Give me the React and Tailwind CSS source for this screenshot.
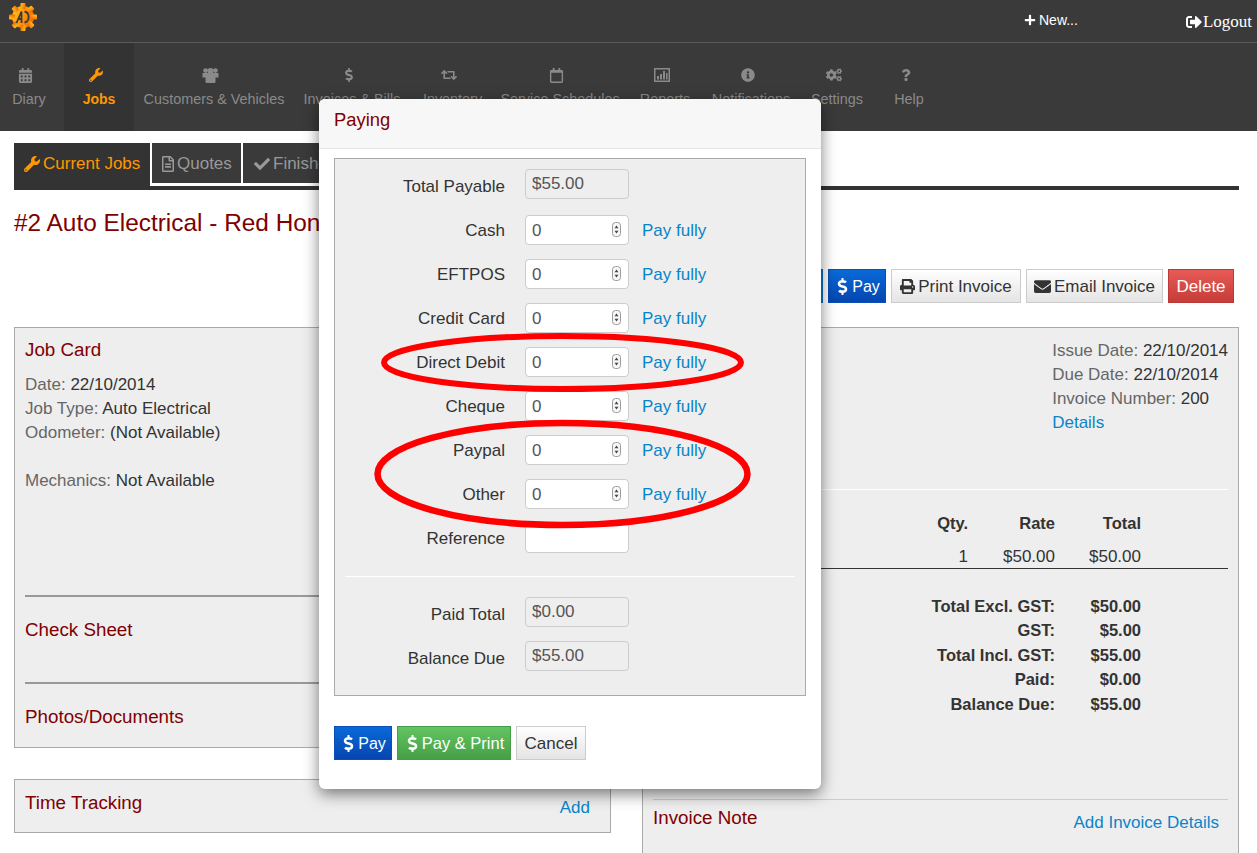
import React from "react";
import { FaCalendarAlt, FaWrench, FaDollarSign, FaRetweet, FaRegCalendar, FaInfoCircle, FaCogs, FaQuestion, FaRegFileAlt, FaCheck, FaPlus, FaPrint, FaEnvelope, FaSignOutAlt } from "react-icons/fa";

const Logo = () => (
  <svg width="30" height="30" viewBox="0 0 30 30" aria-hidden="true">
    <defs>
      <linearGradient id="lg" x1="0" y1="0" x2="1" y2="0.4">
        <stop offset="0" stopColor="#ffc414" />
        <stop offset="0.5" stopColor="#ffa010" />
        <stop offset="1" stopColor="#f26f00" />
      </linearGradient>
    </defs>
    <g fill="url(#lg)">
      <circle cx="15" cy="15" r="11" />
      {[0, 45, 90, 135, 180, 225, 270, 315].map((a) => (
        <rect key={a} x="12.5" y="1" width="5" height="6" rx="1" transform={`rotate(${a} 15 15)`} />
      ))}
    </g>
    <path d="M8.5 21L13.5 9.5V21M10.5 17H13.5M16.5 9.5C22 10.5 22 19.5 16.5 20.5" stroke="#3a3a3a" strokeWidth="1.8" fill="none" />
  </svg>
);

const BarsIcon = () => (
  <svg width="16" height="14" viewBox="0 0 16 14" aria-hidden="true" fill="currentColor">
    <path d="M0 0h16v14H0zM1.5 1.5v11h13v-11z" fillRule="evenodd" />
    <rect x="3" y="8" width="2" height="3.5" />
    <rect x="6" y="6" width="2" height="5.5" />
    <rect x="9" y="3" width="2" height="8.5" />
    <rect x="12" y="5" width="1.5" height="6.5" />
  </svg>
);

const GroupIcon = () => (
  <svg width="17" height="15" viewBox="0 0 17 15" aria-hidden="true" fill="currentColor">
    <circle cx="3.6" cy="2.6" r="2.4" />
    <circle cx="13.4" cy="2.6" r="2.4" />
    <circle cx="8.5" cy="3" r="3" />
    <path d="M0.5 5h16v4.5h-3V14a1 1 0 0 1-1 1h-8a1 1 0 0 1-1-1V9.5h-3z" />
  </svg>
);

const navItems = [
  { label: "Diary", icon: <FaCalendarAlt size={15} />, cls: "w-[58px]", after: "mr-[6px]" },
  { label: "Jobs", icon: <FaWrench size={14} />, cls: "w-[70px]", active: true },
  { label: "Customers & Vehicles", icon: <GroupIcon />, cls: "w-[160px]" },
  { label: "Invoices & Bills", icon: <FaDollarSign size={14} />, cls: "w-[116px]" },
  { label: "Inventory", icon: <FaRetweet size={16} />, cls: "w-[85px]" },
  { label: "Service Schedules", icon: <FaRegCalendar size={15} />, cls: "w-[130px]" },
  { label: "Reports", icon: <BarsIcon />, cls: "w-[80px]" },
  { label: "Notifications", icon: <FaInfoCircle size={14} />, cls: "w-[92px]" },
  { label: "Settings", icon: <FaCogs size={16} />, cls: "w-[80px]" },
  { label: "Help", icon: <FaQuestion size={12} />, cls: "w-[64px]" },
];

const Spinner = () => (
  <svg className="absolute right-[7px] top-[6px]" width="9" height="15" viewBox="0 0 9 15" aria-hidden="true">
    <rect x="0.5" y="0.5" width="8" height="14" rx="3" fill="#f7f7f7" stroke="#9a9a9a" />
    <path d="M4.5 3.5L6.5 6.2H2.5zM4.5 11.5L2.5 8.8H6.5z" fill="#444" />
  </svg>
);

const PayRow = ({ label, value, spinner = true, link = true }) => (
  <div className="flex h-[30px] items-center">
    <div className="w-[170px] pt-[2px] text-right text-[#333]">{label}</div>
    <div className="relative ml-[20px] h-[30px] w-[104px] rounded-[4px] border border-[#ccc] bg-white pl-[6px] leading-[29px] text-[#555]">
      {value}
      {spinner && <Spinner />}
    </div>
    {link && <a className="ml-[13px] pt-[1px] text-[#0a84c8]">Pay fully</a>}
  </div>
);

const ReadRow = ({ label, value }) => (
  <div className="flex h-[30px] items-center">
    <div className="w-[170px] pt-[6px] text-right text-[#333]">{label}</div>
    <div className="ml-[20px] h-[30px] w-[104px] rounded-[4px] border border-[#ccc] bg-[#eee] pl-[6px] leading-[28px] text-[#555]">
      {value}
    </div>
  </div>
);

const Btn = ({ className, children }) => (
  <div className={`flex h-[34px] items-center justify-center gap-[1px] border pt-[1px] whitespace-nowrap ${className}`}>{children}</div>
);

const blue = "border-[#0a4fb5] bg-gradient-to-b from-[#0a6ad8] to-[#0645b0] text-[16px] text-white";
const plain = "border-[#ccc] bg-gradient-to-b from-white to-[#e4e4e4] text-[#333]";

const Meta = ({ k, v }) => (
  <div>
    <span className="text-[#666]">{k}: </span>
    <span className="text-[#333]">{v}</span>
  </div>
);

const Tot = ({ k, v }) => (
  <div className="flex text-[16.5px] font-bold">
    <div className="w-[125px] text-right">{k}</div>
    <div className="w-[86px] text-right">{v}</div>
  </div>
);

const Heading = ({ children }) => (
  <h2 className="text-[18.8px] leading-[26px] text-[#800000]">{children}</h2>
);

export default function App() {
  return (
    <div className="relative h-[853px] w-[1257px] overflow-hidden bg-white font-['Liberation_Sans',Arial,sans-serif] text-[17px] text-[#333]">
      {/* Header */}
      <header className="bg-[#3a3a3a]">
        <div className="flex h-[43px] items-start justify-between border-b border-[#5a5a5a] pl-[8px] pr-[5px] pt-[2px]">
          <Logo />
          <div className="flex pt-[4px] text-[14px] text-white">
            <div className="flex items-center gap-[3px]">
              <FaPlus size={12} />
              <span>New...</span>
            </div>
            <div className="ml-[108px] mt-[3px] flex items-center gap-[1px] font-['Liberation_Serif',serif] text-[17px]">
              <FaSignOutAlt size={16} />
              <span>Logout</span>
            </div>
          </div>
        </div>
        <nav className="flex h-[88px]">
          {navItems.map((n) => (
            <div
              key={n.label}
              className={`flex ${n.cls} ${n.after || ""} flex-col items-center pt-[24px] ${n.active ? "bg-[#333] text-[14px] font-bold text-[#ff9800]" : "text-[14.4px] text-[#8a8a8a]"}`}
            >
              <div className="mr-[7px] flex h-[16px] items-center">{n.icon}</div>
              <div className="mt-[6px] whitespace-nowrap leading-[20px]">{n.label}</div>
            </div>
          ))}
        </nav>
      </header>

      <main className="pl-[14px] pr-[18px] pt-[12px]">
        {/* Tabs */}
        <div className="flex h-[47px] border-b-[4px] border-[#333]">
          <div className="flex h-[43px] w-[136px] items-center gap-[3px] bg-[#333] pb-[1px] pl-[10px] text-[#ff9800]">
            <FaWrench size={16} />
            <span>Current Jobs</span>
          </div>
          <div className="ml-[2px] flex h-[40px] w-[89px] items-center gap-[1px] bg-[#3a3a3a] pl-[8px] pt-[1px] text-[#999]">
            <FaRegFileAlt size={16} />
            <span>Quotes</span>
          </div>
          <div className="ml-[2px] flex h-[40px] w-[110px] items-center gap-[3px] bg-[#3a3a3a] pl-[11px] pt-[1px] text-[#999]">
            <FaCheck size={16} />
            <span>Finished</span>
          </div>
        </div>

        {/* Title */}
        <h1 className="mt-[17px] h-[32px] text-[24.4px] leading-[32px] text-[#800000]">#2 Auto Electrical - Red Honda Civic</h1>

        {/* Actions */}
        <div className="mt-[30px] flex justify-end gap-[5px] pr-[5px]">
          <Btn className="w-[60px] border-[#0a6ebd] bg-[#0a84c8] text-white">Edit</Btn>
          <Btn className={`w-[58px] ${blue}`}>
            <FaDollarSign size={17} />
            Pay
          </Btn>
          <Btn className={`w-[130px] gap-[3px] ${plain}`}>
            <FaPrint size={15} />
            Print Invoice
          </Btn>
          <Btn className={`w-[137px] gap-[3px] ${plain}`}>
            <FaEnvelope size={17} />
            Email Invoice
          </Btn>
          <Btn className="w-[66px] border-[#b93a36] bg-gradient-to-b from-[#e85a56] to-[#c63c38] text-white">Delete</Btn>
        </div>

        {/* Columns */}
        <div className="mt-[24px] grid grid-cols-[597px_597px] gap-[31px]">
          <div>
            <section className="h-[421px] border border-[#aaa] bg-[#eee] px-[10px] pt-[9px]">
              <Heading>Job Card</Heading>
              <div className="mt-[10px] leading-[24px]">
                <Meta k="Date" v="22/10/2014" />
                <Meta k="Job Type" v="Auto Electrical" />
                <Meta k="Odometer" v="(Not Available)" />
                <div className="mt-[24px]">
                  <Meta k="Mechanics" v="Not Available" />
                </div>
              </div>
              <div className="mt-[102px] border-t-2 border-[#999] pt-[20px]">
                <Heading>Check Sheet</Heading>
              </div>
              <div className="mt-[39px] border-t-2 border-[#999] pt-[20px]">
                <Heading>Photos/Documents</Heading>
              </div>
            </section>
            <section className="mt-[31px] flex h-[54px] items-start justify-between border border-[#aaa] bg-[#eee] pl-[10px] pr-[20px] pt-[10px]">
              <Heading>Time Tracking</Heading>
              <a className="mt-[5px] text-[#0a84c8]">Add</a>
            </section>
          </div>

          <section className="h-[560px] border border-[#aaa] bg-[#eee] px-[10px] pt-[11px]">
            <div className="flex justify-end">
              <div className="leading-[24px]">
                <Meta k="Issue Date" v="22/10/2014" />
                <Meta k="Due Date" v="22/10/2014" />
                <Meta k="Invoice Number" v="200" />
                <a className="text-[#0a84c8]">Details</a>
              </div>
            </div>
            <div className="mt-[54px] border-t border-white" />
            <div className="mt-[23px] flex justify-end pr-[87px] text-[16.5px] leading-[20px]">
              <div className="w-[60px] pr-[1px] text-right font-bold">Qty.</div>
              <div className="w-[86px] text-right font-bold">Rate</div>
              <div className="w-[86px] text-right font-bold">Total</div>
            </div>
            <div className="mt-[14px] flex justify-end border-b border-[#333] pb-[1px] pr-[87px] leading-[20px]">
              <div className="w-[60px] pr-[1px] text-right">1</div>
              <div className="w-[86px] text-right">$50.00</div>
              <div className="w-[86px] text-right">$50.00</div>
            </div>
            <div className="mt-[24.75px] flex flex-col items-end pr-[87px] leading-[24.5px]">
              <Tot k="Total Excl. GST:" v="$50.00" />
              <Tot k="GST:" v="$5.00" />
              <Tot k="Total Incl. GST:" v="$55.00" />
              <Tot k="Paid:" v="$0.00" />
              <Tot k="Balance Due:" v="$55.00" />
            </div>
            <div className="mt-[82.75px] flex items-start justify-between border-t border-[#ccc] pr-[9px] pt-[5px]">
              <Heading>Invoice Note</Heading>
              <a className="mt-[5px] text-[#0a84c8]">Add Invoice Details</a>
            </div>
          </section>
        </div>
      </main>

      {/* Modal */}
      <div className="absolute left-[319px] top-[99px] h-[690px] w-[502px] overflow-hidden rounded-[6px] bg-white shadow-[0_5px_15px_rgba(0,0,0,0.5)]">
        <div className="flex h-[50px] items-center border-b border-[#e5e5e5] bg-[#f7f7f7] pb-[8px] pl-[15px] text-[18.4px] text-[#800000]">Paying</div>
        <div className="mx-[15px] mt-[9px] h-[538px] border border-[#aaa] bg-[#eee] pt-[10px]">
          <ReadRow label="Total Payable" value="$55.00" />
          <div className="mt-[16px] flex flex-col gap-[14px]">
            <PayRow label="Cash" value="0" />
            <PayRow label="EFTPOS" value="0" />
            <PayRow label="Credit Card" value="0" />
            <PayRow label="Direct Debit" value="0" />
            <PayRow label="Cheque" value="0" />
            <PayRow label="Paypal" value="0" />
            <PayRow label="Other" value="0" />
            <PayRow label="Reference" value="" spinner={false} link={false} />
          </div>
          <div className="mx-[10px] mt-[23px] border-t border-white" />
          <div className="mt-[20px] flex flex-col gap-[14px]">
            <ReadRow label="Paid Total" value="$0.00" />
            <ReadRow label="Balance Due" value="$55.00" />
          </div>
        </div>
        <div className="mx-[15px] mt-[30px] flex gap-[5px]">
          <Btn className={`w-[58px] ${blue}`}>
            <FaDollarSign size={17} />
            Pay
          </Btn>
          <Btn className="w-[114px] border-[#449d44] bg-gradient-to-b from-[#62c462] to-[#46a046] text-[16.5px] text-white">
            <FaDollarSign size={17} />
            Pay &amp; Print
          </Btn>
          <Btn className={`w-[70px] ${plain}`}>Cancel</Btn>
        </div>
      </div>

      {/* Hand-drawn annotation */}
      <svg className="pointer-events-none absolute left-0 top-0" width="1257" height="853" aria-hidden="true">
        <ellipse cx="562.5" cy="362.5" rx="178.5" ry="26.5" fill="none" stroke="#ff0000" strokeWidth="6" />
        <ellipse cx="562.5" cy="474" rx="185" ry="51" fill="none" stroke="#ff0000" strokeWidth="6.5" />
      </svg>
    </div>
  );
}
